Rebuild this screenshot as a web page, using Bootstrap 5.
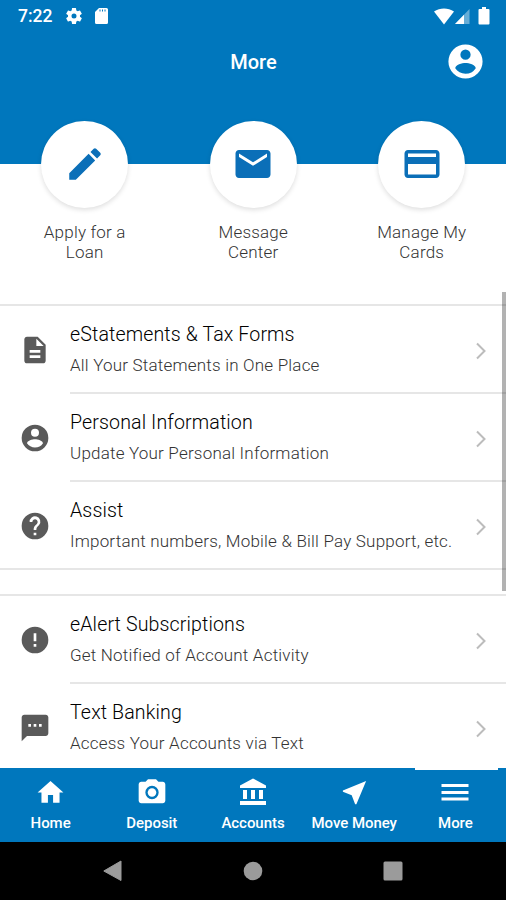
<!DOCTYPE html>
<html lang="en">
<head>
<meta charset="utf-8">
<meta name="viewport" content="width=device-width, initial-scale=1">
<title>More</title>
<link href="https://cdn.jsdelivr.net/npm/bootstrap@5.3.0/dist/css/bootstrap.min.css" rel="stylesheet">
<style>
:root { --brand: #0077bd; }
body { font-family: Roboto, "Liberation Sans", sans-serif; color: #111; background: #fff; }
svg { display: block; fill: currentColor; flex: none; }
.screen { height: 900px; }
.top-area { background: var(--brand); height: 164px; }
.status { height: 32px; padding: 0 16px 0 18px; }
.clock { font-size: 17.500px; font-weight: 500; width: 46px; }
.title-bar { height: 58px; display: grid; grid-template-columns: 1fr auto 1fr; padding: 0 20px; }
.page-title { font-size: 20px; font-weight: 500; padding: 1px 0 0 1px; }
.shortcuts { margin-top: -43px; height: 183px; padding-left: .5px; }
.round-btn { width: 87px; height: 87px; background: #fff; color: #0b6fb8; box-shadow: 0 2px 5px rgba(0,0,0,.13); padding-bottom: 2px; }
.shortcut-label { margin-top: 14px; font-size: 17px; line-height: 20px; color: #333; font-weight: 300; letter-spacing: .2px; }
.menu-group { border-top: 2px solid #e6e6e6; }
.menu-row { height: 88px; padding-left: 19px; color: #5a5a5a; }
.menu-row > svg { margin-bottom: 1px; }
.menu-text { margin-left: 19px; height: 88px; padding-top: 16px; border-bottom: 2px solid #e6e6e6; }
.menu-group.closed { border-bottom: 2px solid #e6e6e6; height: 266px; }
.menu-group.closed .menu-row:last-child .menu-text, .menu-group.open .menu-row:last-child .menu-text { border-bottom-color: transparent; }
.menu-title { font-size: 19.600px; line-height: 26px; color: #000; font-weight: 300; letter-spacing: .12px; }
.menu-sub { font-size: 17px; line-height: 24px; margin-top: 5px; color: #333; font-weight: 300; letter-spacing: .2px; }
.chevron { fill: none; stroke: #bcbcbc; stroke-width: 2; margin-right: 19px; }
.thumb { position: absolute; right: 0; top: 292px; width: 4px; height: 299px; background: rgba(0,0,0,.3); }
.tabs { height: 74px; background: var(--brand); }
.tab { font-size: 15px; font-weight: 500; line-height: 18px; padding-top: 8px; letter-spacing: -.05px; }
.tab svg { margin-bottom: 5px; }
.tab.current::before { content: ""; position: absolute; top: 0; left: 10px; width: 83px; height: 2px; background: #fff; }
.sys-nav { height: 58px; background: #000; color: #9b9b9b; gap: 120px; }
</style>
<script src="https://cdn.jsdelivr.net/npm/bootstrap@5.3.0/dist/js/bootstrap.bundle.min.js"></script>
</head>
<body>
<div class="screen d-flex flex-column position-relative overflow-hidden">
  <header class="top-area text-white flex-shrink-0">
    <div class="status d-flex align-items-center">
      <span class="clock">7:22</span>
      <svg width="20" height="20" viewBox="0 0 24 24"><path fill-rule="evenodd" d="M19.140 12.940c.04-.3.06-.61.06-.94s-.02-.64-.07-.94l2.030-1.580c.18-.14.23-.41.12-.61l-1.920-3.320c-.12-.22-.37-.29-.59-.22l-2.390.96c-.5-.38-1.030-.7-1.620-.94l-.36-2.540a.48.48 0 0 0-.48-.41h-3.840c-.24 0-.43.17-.47.41l-.36 2.540c-.59.24-1.130.57-1.620.94l-2.390-.96c-.22-.08-.47 0-.59.22L2.740 8.870c-.12.21-.08.47.12.61l2.030 1.580c-.05.3-.09.63-.09.94s.02.64.07.94l-2.030 1.580c-.18.14-.23.41-.12.61l1.920 3.320c.12.22.37.29.59.22l2.390-.96c.5.38 1.030.7 1.620.94l.36 2.540c.05.24.24.41.48.41h3.840c.24 0 .44-.17.47-.41l.36-2.540c.59-.24 1.130-.56 1.620-.94l2.390.96c.22.08.47 0 .59-.22l1.920-3.320c.12-.22.07-.47-.12-.61zM12 15a3 3 0 1 1 0-6 3 3 0 0 1 0 6z"/></svg>
      <svg class="ms-2" width="18" height="20" viewBox="0 0 18 20"><path fill-rule="evenodd" d="M7 2h7.500Q16 2 16 3.500v13q0 1.500-1.500 1.500h-10Q3 18 3 16.500V6zm.5 1.500v2h1v-2zm2.500 0v2h1v-2zm2.500 0v2h1v-2z"/></svg>
      <svg class="ms-auto" width="20" height="17" viewBox="0 0 20 17"><path d="M0 3.600C6-.6 14-.6 20 3.600L10 16.500z"/></svg>
      <svg width="16" height="17" viewBox="0 0 16 17" class="me-1"><path opacity=".4" d="M15.500 1v15H1z"/><path d="M10 6.700V16H1z"/></svg>
      <svg width="12" height="18" viewBox="0 0 12 18" class="ms-1"><path d="M1.500 2H4V0h4v2h2.500Q11.500 2 11.500 3v13.500q0 1-1 1h-9q-1 0-1-1V3q0-1 1-1z"/></svg>
    </div>
    <div class="title-bar align-items-center">
      <span></span>
      <span class="page-title">More</span>
      <svg class="ms-auto" width="41" height="41" viewBox="0 0 24 24"><path fill-rule="evenodd" d="M12 2a10 10 0 1 0 0 20 10 10 0 0 0 0-20zm0 3a3 3 0 1 1 0 6 3 3 0 0 1 0-6zm0 14.200c-2.500 0-4.710-1.280-6-3.220.03-1.990 4-3.080 6-3.080s5.970 1.090 6 3.080a7.200 7.200 0 0 1-6 3.220z"/></svg>
    </div>
  </header>

  <section class="shortcuts row g-0 flex-shrink-0 text-center">
    <div class="col-4 d-flex flex-column align-items-center">
      <div class="round-btn rounded-circle d-flex align-items-center justify-content-center">
        <svg width="42" height="42" viewBox="0 0 24 24"><path d="M3 17.250V21h3.750L17.810 9.940l-3.750-3.750zM20.710 7.040a1 1 0 0 0 0-1.410l-2.340-2.340a1 1 0 0 0-1.410 0l-1.830 1.830 3.750 3.750z"/></svg>
      </div>
      <div class="shortcut-label">Apply for a<br>Loan</div>
    </div>
    <div class="col-4 d-flex flex-column align-items-center">
      <div class="round-btn rounded-circle d-flex align-items-center justify-content-center">
        <svg width="42" height="42" viewBox="0 0 24 24"><path d="M20 4H4c-1.100 0-2 .9-2 2v12c0 1.100.9 2 2 2h16c1.100 0 2-.9 2-2V6c0-1.100-.9-2-2-2zm0 4-8 5-8-5V6l8 5 8-5z"/></svg>
      </div>
      <div class="shortcut-label">Message<br>Center</div>
    </div>
    <div class="col-4 d-flex flex-column align-items-center">
      <div class="round-btn rounded-circle d-flex align-items-center justify-content-center">
        <svg width="42" height="42" viewBox="0 0 24 24"><path fill-rule="evenodd" d="M20 4H4c-1.110 0-2 .89-2 2v12c0 1.110.89 2 2 2h16c1.110 0 2-.89 2-2V6c0-1.110-.89-2-2-2zM4 6h16v2H4zm0 6h16v6H4z"/></svg>
      </div>
      <div class="shortcut-label">Manage My<br>Cards</div>
    </div>
  </section>

  <main class="flex-grow-1 overflow-hidden">
    <div class="menu-group closed">
      <div class="menu-row d-flex align-items-center">
        <svg width="32" height="32" viewBox="0 0 24 24"><path d="M14 2H6c-1.100 0-2 .9-2 2v16c0 1.100.9 2 2 2h12c1.100 0 2-.9 2-2V8zm2 16H8v-2h8zm0-4H8v-2h8zm-3-5V3.500L18.500 9z"/></svg>
        <div class="menu-text flex-grow-1 d-flex justify-content-between">
          <div><div class="menu-title">eStatements &amp; Tax Forms</div><div class="menu-sub">All Your Statements in One Place</div></div>
          <svg class="chevron mt-3" width="12" height="26" viewBox="0 0 12 26"><path d="M2 5.500l7.500 7.500L2 20.500"/></svg>
        </div>
      </div>
      <div class="menu-row d-flex align-items-center">
        <svg width="32" height="32" viewBox="0 0 24 24"><path fill-rule="evenodd" d="M12 2a10 10 0 1 0 0 20 10 10 0 0 0 0-20zm0 3a3 3 0 1 1 0 6 3 3 0 0 1 0-6zm0 14.200c-2.500 0-4.710-1.280-6-3.220.03-1.990 4-3.080 6-3.080s5.970 1.090 6 3.080a7.200 7.200 0 0 1-6 3.220z"/></svg>
        <div class="menu-text flex-grow-1 d-flex justify-content-between">
          <div><div class="menu-title">Personal Information</div><div class="menu-sub">Update Your Personal Information</div></div>
          <svg class="chevron mt-3" width="12" height="26" viewBox="0 0 12 26"><path d="M2 5.500l7.500 7.500L2 20.500"/></svg>
        </div>
      </div>
      <div class="menu-row d-flex align-items-center">
        <svg width="32" height="32" viewBox="0 0 24 24"><path d="M12 2a10 10 0 1 0 0 20 10 10 0 0 0 0-20zm1 17h-2v-2h2zm2.070-7.750-.9.920C13.450 12.900 13 13.500 13 15h-2v-.5c0-1.100.45-2.100 1.170-2.830l1.240-1.260A2 2 0 1 0 10 9H8a4 4 0 1 1 7.070 2.250z"/></svg>
        <div class="menu-text flex-grow-1 d-flex justify-content-between">
          <div><div class="menu-title">Assist</div><div class="menu-sub">Important numbers, Mobile &amp; Bill Pay Support, etc.</div></div>
          <svg class="chevron mt-3" width="12" height="26" viewBox="0 0 12 26"><path d="M2 5.500l7.500 7.500L2 20.500"/></svg>
        </div>
      </div>
    </div>
    <div class="menu-group open mt-4">
      <div class="menu-row d-flex align-items-center">
        <svg width="32" height="32" viewBox="0 0 24 24"><path d="M12 2a10 10 0 1 0 0 20 10 10 0 0 0 0-20zm1 15h-2v-2h2zm0-4h-2V7h2z"/></svg>
        <div class="menu-text flex-grow-1 d-flex justify-content-between">
          <div><div class="menu-title">eAlert Subscriptions</div><div class="menu-sub">Get Notified of Account Activity</div></div>
          <svg class="chevron mt-3" width="12" height="26" viewBox="0 0 12 26"><path d="M2 5.500l7.500 7.500L2 20.500"/></svg>
        </div>
      </div>
      <div class="menu-row d-flex align-items-center">
        <svg width="32" height="32" viewBox="0 0 24 24"><path d="M20 2H4c-1.100 0-1.990.9-1.990 2L2 22l4-4h14c1.100 0 2-.9 2-2V4c0-1.100-.9-2-2-2zM9 11H7V9h2zm4 0h-2V9h2zm4 0h-2V9h2z"/></svg>
        <div class="menu-text flex-grow-1 d-flex justify-content-between">
          <div><div class="menu-title">Text Banking</div><div class="menu-sub">Access Your Accounts via Text</div></div>
          <svg class="chevron mt-3" width="12" height="26" viewBox="0 0 12 26"><path d="M2 5.500l7.500 7.500L2 20.500"/></svg>
        </div>
      </div>
    </div>
  </main>
  <div class="thumb"></div>

  <nav class="tabs d-flex flex-shrink-0 text-white text-center text-nowrap">
    <div class="tab col d-flex flex-column align-items-center"><svg width="31" height="33" viewBox="0 0 24 24"><path d="M10 20v-6h4v6h5v-8h3L12 3 2 12h3v8z"/></svg>Home</div>
    <div class="tab col d-flex flex-column align-items-center"><svg width="32" height="33" viewBox="0 0 24 24"><path d="M9 2 7.170 4H4c-1.100 0-2 .9-2 2v12c0 1.100.9 2 2 2h16c1.100 0 2-.9 2-2V6c0-1.100-.9-2-2-2h-3.170L15 2zm3 15a5 5 0 1 1 0-10 5 5 0 0 1 0 10z"/><circle cx="12" cy="12" r="3.200"/></svg>Deposit</div>
    <div class="tab col d-flex flex-column align-items-center"><svg width="32" height="33" viewBox="0 0 32 33"><path d="M16 2.500 3 9.500V12h26V9.500zM6 14h4v9H6zm8 0h4v9h-4zm8 0h4v9h-4zM3 25h26v4H3z"/></svg>Accounts</div>
    <div class="tab col d-flex flex-column align-items-center"><svg width="31" height="33" viewBox="0 0 24 24"><path d="M21 3 3 10.530v.98l6.840 2.650L12.480 21h.98z"/></svg>Move Money</div>
    <div class="tab current position-relative col d-flex flex-column align-items-center"><svg width="32" height="33" viewBox="0 0 32 33"><path d="M2.500 8h27v3h-27zm0 7h27v3h-27zm0 6.500h27v3h-27z"/></svg>More</div>
  </nav>
  <footer class="sys-nav d-flex flex-shrink-0 align-items-center justify-content-center">
    <svg width="20" height="22" viewBox="0 0 20 22"><path d="M18 1v19.500L.8 11z" stroke="currentColor" stroke-linejoin="round"/></svg>
    <svg width="20" height="20" viewBox="0 0 20 20"><circle cx="10" cy="10" r="9.300"/></svg>
    <svg width="20" height="20" viewBox="0 0 20 20"><rect x=".5" y=".5" width="19" height="19" rx="1.500"/></svg>
  </footer>
</div>
</body>
</html>
